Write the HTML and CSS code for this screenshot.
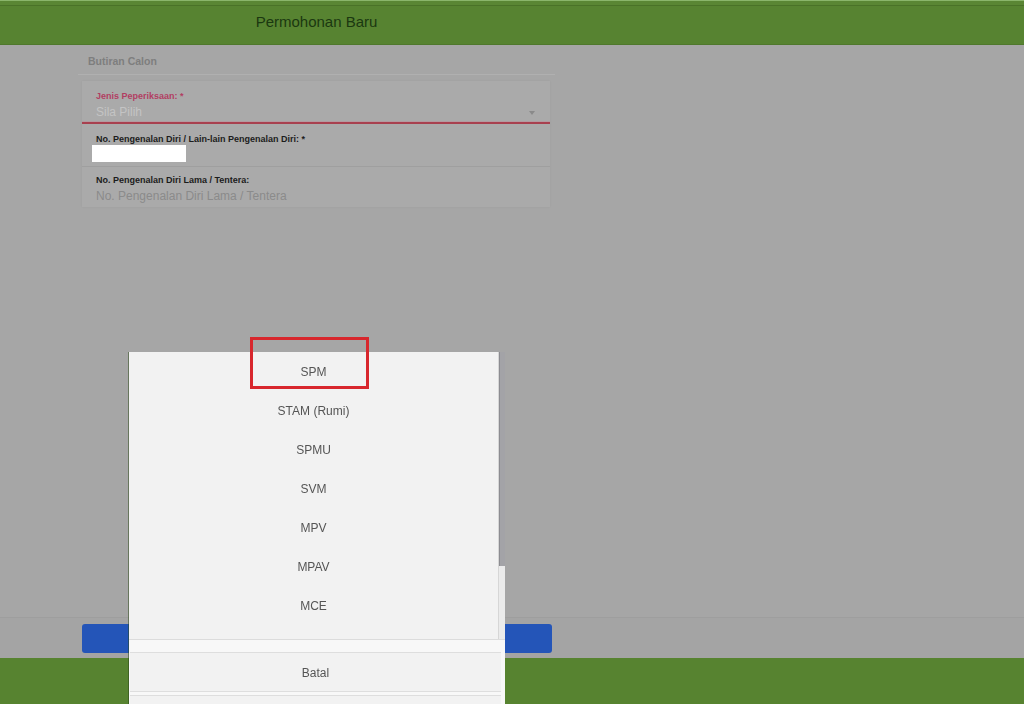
FILE: index.html
```html
<!DOCTYPE html>
<html lang="ms">
<head>
<meta charset="utf-8">
<title>Permohonan Baru</title>
<link rel="stylesheet" href="styles.css">
</head>
<body>
  <header class="topbar">
    <div class="topbar-inner">Permohonan Baru</div>
  </header>

  <main class="main">
    <div class="section-title">Butiran Calon</div>
    <div class="card">
      <div class="field field-select">
        <div class="label label-error">Jenis Peperiksaan: *</div>
        <div class="select-row">
          <span class="placeholder-light">Sila Pilih</span>
          <span class="caret"></span>
        </div>
      </div>
      <div class="field field-id">
        <div class="label">No. Pengenalan Diri / Lain-lain Pengenalan Diri: *</div>
        <div class="white-box"></div>
      </div>
      <div class="field field-old">
        <div class="label">No. Pengenalan Diri Lama / Tentera:</div>
        <div class="placeholder">No. Pengenalan Diri Lama / Tentera</div>
      </div>
    </div>
  </main>

  <div class="action-band">
    <div class="blue-btn"></div>
  </div>
  <footer class="footer"></footer>

  <div class="picker">
    <div class="picker-list">
      <ul class="options">
        <li class="option">SPM</li>
        <li class="option">STAM (Rumi)</li>
        <li class="option">SPMU</li>
        <li class="option">SVM</li>
        <li class="option">MPV</li>
        <li class="option">MPAV</li>
        <li class="option">MCE</li>
      </ul>
      <div class="scrollbar"><div class="thumb"></div></div>
    </div>
    <div class="picker-actions">
      <div class="picker-btn">Batal</div>
      <div class="picker-btn picker-btn-next"></div>
    </div>
  </div>

  <div class="highlight"></div>
</body>
</html>
```

FILE: styles.css
```css
* { box-sizing: border-box; }

html, body {
  margin: 0;
  padding: 0;
}

body {
  width: 1024px;
  height: 704px;
  overflow: hidden;
  background: #a6a6a6;
  font-family: "Liberation Sans", Arial, sans-serif;
  display: flex;
  flex-direction: column;
}

/* ---------- header ---------- */
.topbar {
  height: 45px;
  flex: none;
  border-top: 1px solid #8ab56b;
  background: linear-gradient(#5a8634 0 4px, #4a7228 4px 5px, #578331 5px 43px, #4f782c 43px);
}

.topbar-inner {
  width: 477px;
  margin-left: 78px;
  text-align: center;
  font-size: 15px;
  line-height: 18px;
  padding-top: 12px;
  color: #1b3810;
}

/* ---------- main ---------- */
.main {
  flex: 1;
  width: 477px;
  margin-left: 78px;
}

.section-title {
  font-size: 10.5px;
  font-weight: bold;
  color: #7e7e7e;
  line-height: 13px;
  padding: 10px 0 6px 10px;
  border-bottom: 1px solid #b0b0b0;
}

.card {
  margin: 6px 0 0 4px;
  width: 468px;
  background: #aaaaaa;
  box-shadow: 0 0 2px rgba(0, 0, 0, 0.06);
}

.field {
  padding-left: 14px;
  padding-right: 14px;
}

.label {
  font-size: 9px;
  line-height: 11px;
  font-weight: bold;
  color: #1c1c1c;
}

.label-error {
  color: #b23e62;
}

.field-select {
  padding-top: 10px;
  padding-bottom: 3px;
  border-bottom: 2px solid #a8404f;
  box-shadow: 0 -1px 0 #b49aa0 inset;
}

.select-row {
  margin-top: 3px;
  display: flex;
  align-items: center;
  justify-content: space-between;
}

.placeholder-light {
  font-size: 12px;
  line-height: 14px;
  color: #c4c4c4;
}

.caret {
  width: 0;
  height: 0;
  border-left: 3.5px solid transparent;
  border-right: 3.5px solid transparent;
  border-top: 4px solid #8a8a8a;
  margin-right: 1px;
  margin-top: 2px;
}

.field-id {
  padding-top: 10px;
  padding-bottom: 4px;
  border-bottom: 1px solid #9f9f9f;
}

.white-box {
  margin: 0 0 0 -4px;
  width: 94px;
  height: 17px;
  background: #ffffff;
}

.field-old {
  padding-top: 8px;
  padding-bottom: 4px;
}

.placeholder {
  margin-top: 3px;
  font-size: 12px;
  line-height: 14px;
  color: #8b8b8b;
}

/* ---------- bottom ---------- */
.action-band {
  flex: none;
  height: 41px;
  background: #a4a4a4;
  border-top: 1px solid #9e9e9e;
  padding: 6px 0 0 82px;
}

.blue-btn {
  width: 470px;
  height: 29px;
  border-radius: 3px;
  background: #2455b8;
}

.footer {
  flex: none;
  height: 46px;
  background: #578330;
}

/* ---------- picker overlay ---------- */
.picker {
  position: fixed;
  left: 129px;
  top: 352px;
  width: 376px;
  height: 352px;
  background: #f8f8f8;
  box-shadow: -1px 0 0 rgba(40, 70, 20, 0.5);
}

.picker-list {
  height: 288px;
  display: flex;
  border-bottom: 1px solid #dcdcdc;
  background: #f2f2f2;
}

.options {
  list-style: none;
  margin: 0;
  padding: 1px 0 0;
  flex: 1;
}

.option {
  height: 39px;
  line-height: 39px;
  text-align: center;
  font-size: 12px;
  color: #555555;
}

.scrollbar {
  width: 7px;
  flex: none;
  background: #ebebeb;
  border-left: 1px solid #d6d6d6;
}

.thumb {
  height: 214px;
  background: #a3a3a7;
  border-left: 1px solid #8c8c91;
}

.picker-actions {
  padding-top: 12px;
  width: 371px;
  margin-left: 1px;
  display: flex;
  flex-direction: column;
  gap: 3px;
}

.picker-btn {
  height: 40px;
  line-height: 40px;
  text-align: center;
  font-size: 12px;
  color: #555555;
  background: #f2f2f2;
  border-top: 1px solid #dedede;
  border-bottom: 1px solid #dedede;
}

.picker-btn-next {
  height: 20px;
}

.highlight {
  position: fixed;
  left: 250px;
  top: 337px;
  width: 119px;
  height: 52px;
  border: 3px solid #d8272d;
}
```
